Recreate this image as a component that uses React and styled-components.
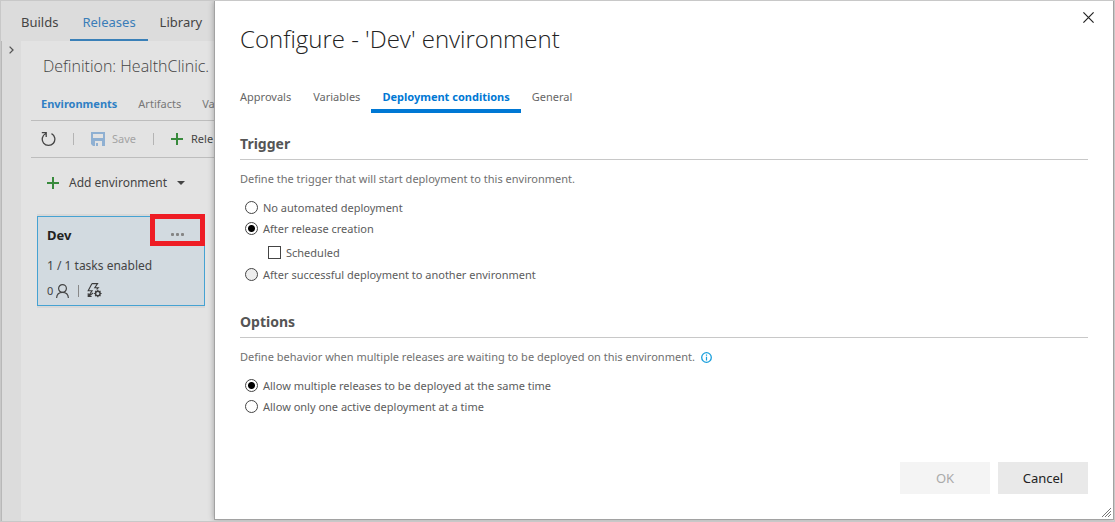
import React from "react";
import styled, { createGlobalStyle } from "styled-components";

const GlobalStyle = createGlobalStyle`
  *, *::before, *::after { box-sizing: border-box; }
  html, body { margin: 0; height: 100%; }
  #root { height: 100%; }
  body, button, input {
    font-family: "Noto Sans", "Open Sans", sans-serif;
    font-size: 11px;
  }
  h1, h2, h3, p { margin: 0; }
  button { border: 0; padding: 0; background: none; color: inherit; cursor: pointer; }
  a { color: inherit; text-decoration: none; }
  svg { display: block; flex: none; }
`;

const Page = styled.div`
  position: relative;
  display: flex;
  flex-direction: column;
  min-height: 100%;
  overflow: hidden;
  background: #dcdcdc;
  border: 1px solid #c8c8c8;
  color: #444;
`;

const TopNav = styled.nav`
  display: flex;
  height: 40px;
  padding-left: 8px;
`;

const TopLink = styled.a`
  padding: 0 12px;
  font-size: 13px;
  line-height: 42px;
  height: 40px;
  color: ${(p) => (p.$active ? "#3a7db8" : "#444")};
  border-bottom: 2px solid ${(p) => (p.$active ? "#3a80b8" : "transparent")};
`;

const Workspace = styled.div`
  display: flex;
  flex: 1;
`;

const Rail = styled.aside`
  width: 20px;
  border-left: 1px solid #b8b8b8;
  padding: 5px 0 0 7px;
`;

const RailButton = styled.button`
  display: block;
`;

const Main = styled.main`
  flex: 1;
  min-width: 0;
  padding-left: 10px;
  background: #e3e3e3;
`;

const DefinitionTitle = styled.h1`
  padding: 12px 0 0 12px;
  font-family: "Open Sans", sans-serif;
  font-size: 16px;
  font-weight: 300;
  line-height: 26px;
  white-space: nowrap;
`;

const SubTabs = styled.nav`
  display: flex;
  gap: 21px;
  padding: 14px 0 5px 10px;
  line-height: 22px;
`;

const SubTab = styled.a`
  color: ${(p) => (p.$active ? "#2f7fc4" : "#777")};
  font-weight: ${(p) => (p.$active ? 700 : 400)};
`;

const Toolbar = styled.div`
  display: flex;
  align-items: center;
  height: 38px;
  padding-left: 10px;
  border-top: 1px solid #bdbdbd;
  border-bottom: 1px solid #bdbdbd;
`;

const ToolButton = styled.button`
  display: flex;
  align-items: center;
  gap: ${(p) => p.$gap || 7}px;
  font-size: ${(p) => (p.$large ? 12 : 11)}px;
  line-height: 20px;
  white-space: nowrap;
  color: ${(p) => (p.disabled ? "#a3a3a3" : "#444")};
`;

const Divider = styled.span`
  width: 1px;
  height: 12px;
  margin: 0 17px;
  background: #b4b4b4;
`;

const AddRow = styled.div`
  display: flex;
  padding: 15px 0 23px 16px;
`;

const EnvironmentCard = styled.section`
  position: relative;
  width: 168px;
  margin-left: 6px;
  padding: 8px 9px 5px;
  background: #d2dae0;
  border: 1px solid #46a2d2;
  box-shadow: 0 2px 0 #d8d8d8, 0 -2px 0 #d8d8d8;
`;

const CardTitle = styled.h2`
  font-size: 13px;
  line-height: 20px;
  color: #222;
`;

const CardTasks = styled.p`
  padding-top: 11px;
  font-size: 12px;
  line-height: 20px;
`;

const CardMeta = styled.div`
  display: flex;
  align-items: center;
  gap: 3px;
  padding-top: 5px;
  font-size: 11px;
  line-height: 19px;
`;

const MetaDivider = styled.span`
  width: 1px;
  height: 12px;
  margin: 0 5px 0 6px;
  background: #888;
`;

const MoreButton = styled.button`
  position: absolute;
  top: -3px;
  right: -1px;
  display: flex;
  align-items: center;
  justify-content: center;
  gap: 2px;
  width: 55px;
  height: 32px;
  padding-top: 9px;
  border: 5px solid #ee1c24;
`;

const Dot = styled.i`
  width: 3px;
  height: 3px;
  border-radius: 1px;
  background: #858585;
`;

const Dialog = styled.section`
  position: absolute;
  inset: 0 0 1px 213px;
  display: flex;
  flex-direction: column;
  padding: 17px 25px 25px;
  background: #fff;
  border: 1px solid #a2a2a2;
  border-top: 0;
  box-shadow: 0 0 6px rgba(0, 0, 0, 0.3);
  color: #5c5c5c;
`;

const DialogTitle = styled.h2`
  font-family: "Open Sans", sans-serif;
  font-size: 24px;
  font-weight: 300;
  line-height: 42px;
  color: #222;
`;

const CloseButton = styled.button`
  position: absolute;
  top: 10px;
  right: 18px;
  padding: 1px;
`;

const DialogTabs = styled.nav`
  display: flex;
  margin: 26px 0 0 -11px;
`;

const DialogTab = styled.a`
  padding: 0 11px 1px;
  line-height: 22px;
  border-bottom: 4px solid ${(p) => (p.$active ? "#0078d4" : "transparent")};
  color: ${(p) => (p.$active ? "#0078d4" : "#666")};
  font-weight: ${(p) => (p.$active ? 700 : 400)};
`;

const Section = styled.section`
  padding-top: ${(p) => p.$top}px;
`;

const SectionTitle = styled.h3`
  padding-bottom: 5px;
  border-bottom: 1px solid #c8c8c8;
  font-size: 14px;
  line-height: 20px;
  color: #555;
`;

const Description = styled.p`
  display: flex;
  align-items: center;
  gap: 6px;
  padding: 8px 0 7px;
  line-height: 22px;
  color: #707070;
`;

const Choice = styled.label`
  display: flex;
  align-items: center;
  gap: 5px;
  width: fit-content;
  margin-left: ${(p) => (p.$nested ? 28 : 5)}px;
  padding: ${(p) => (p.$nested ? "3px 0 1px" : "0")};
  line-height: 21px;
`;

const Mark = styled.input`
  appearance: none;
  width: 13px;
  height: 13px;
  margin: 0;
  border: 1px solid #444;
  border-radius: ${(p) => (p.type === "radio" ? "50%" : "0")};
  background: ${(p) => (p.disabled ? "#eee" : "#fff")};
  &:checked {
    background: radial-gradient(circle, #000 0 3px, #fff 4px);
  }
`;

const Footer = styled.footer`
  display: flex;
  justify-content: flex-end;
  gap: 8px;
  margin-top: auto;
`;

const FooterButton = styled.button`
  width: 90px;
  height: 32px;
  font-size: 13px;
  background: ${(p) => (p.disabled ? "#f4f4f4" : "#e9e9e9")};
  color: ${(p) => (p.disabled ? "#aaa" : "#222")};
`;

const ResizeGrip = styled.span`
  position: absolute;
  right: 2px;
  bottom: 2px;
`;

const PlusIcon = () => (
  <svg width="12" height="12" viewBox="0 0 12 12" stroke="#388a3c" strokeWidth="2">
    <path d="M6 0v12M0 6h12" />
  </svg>
);

const RefreshIcon = () => (
  <svg width="15" height="16" viewBox="0 0 15 16" fill="none" stroke="#444" strokeWidth="1.3">
    <path d="M10.500 2.600A6.300 6.300 0 1 1 4.800 2.500M.8 1.700h4.400v4.300" />
  </svg>
);

const SaveIcon = () => (
  <svg width="14" height="14" viewBox="0 0 14 14" fill="#8fb0d2">
    <path fillRule="evenodd" d="M0 0h14v14h-3V9H4v5H2L0 12zM2 2v4h10V2z" />
    <path d="M5 11h2v3H5z" />
  </svg>
);

const CaretIcon = () => (
  <svg width="8" height="4" viewBox="0 0 8 4" fill="#444">
    <path d="M0 0h8L4 4z" />
  </svg>
);

const ChevronIcon = () => (
  <svg width="5" height="8" viewBox="0 0 5 8" fill="none" stroke="#555" strokeWidth="1.3">
    <path d="M.6.6 4 4 .6 7.4" />
  </svg>
);

const PersonIcon = () => (
  <svg width="13" height="14" viewBox="0 0 13 14" fill="none" stroke="#444" strokeWidth="1.2">
    <circle cx="6.5" cy="4.5" r="3.9" />
    <path d="M.6 14c.2-3.3 2.4-5.6 5.9-5.6s5.7 2.3 5.9 5.6" />
  </svg>
);

const TriggerIcon = () => (
  <svg width="15" height="15" viewBox="0 0 15 15" fill="none" stroke="#3c3c3c" strokeWidth="1.1">
    <path d="M5 .6h5.600L7.800 4.800h3.400L9.600 6.300M5 .6 1.200 7.700h3.900L1.200 13.400l5-3.400M1.200 10.200v3.200h3.400" />
    <circle cx="10.8" cy="10.5" r="2.3" strokeWidth="1.5" />
    <path d="M10.800 6.800v1.400M10.800 12.800v1.500M7.100 10.500h1.400M13.100 10.500h1.500M8.100 7.800l1.100 1.100M12.400 12.100l1.100 1.100M8.100 13.200l1.100-1.100M12.400 8.900l1.100-1.100" />
  </svg>
);

const InfoIcon = () => (
  <svg width="11" height="11" viewBox="0 0 11 11" fill="none" stroke="#1a9fdc">
    <circle cx="5.5" cy="5.5" r="4.8" strokeWidth="1.3" />
    <path d="M5.5 2.5v1.2M5.5 4.7v3.7" strokeWidth="1.2" />
  </svg>
);

const CloseIcon = () => (
  <svg width="11" height="11" viewBox="0 0 11 11" fill="none" stroke="#222" strokeWidth="1.2">
    <path d="m.4.4 10.2 10.2M10.6.4.4 10.6" />
  </svg>
);

const GripIcon = () => (
  <svg width="9" height="9" viewBox="0 0 9 9" fill="none" stroke="#777">
    <path d="M0 9 9 0M3 9l6-6M6 9l3-3" />
  </svg>
);

export default function App() {
  return (
    <>
      <GlobalStyle />
      <Page>
        <TopNav>
          <TopLink href="#builds">Builds</TopLink>
          <TopLink href="#releases" $active>Releases</TopLink>
          <TopLink href="#library">Library</TopLink>
        </TopNav>
        <Workspace>
          <Rail>
            <RailButton type="button" aria-label="Expand panel"><ChevronIcon /></RailButton>
          </Rail>
          <Main>
            <DefinitionTitle>Definition: HealthClinic.</DefinitionTitle>
            <SubTabs>
              <SubTab href="#environments" $active>Environments</SubTab>
              <SubTab href="#artifacts">Artifacts</SubTab>
              <SubTab href="#variables">Va</SubTab>
            </SubTabs>
            <Toolbar>
              <ToolButton type="button" aria-label="Refresh"><RefreshIcon /></ToolButton>
              <Divider />
              <ToolButton type="button" disabled><SaveIcon />Save</ToolButton>
              <Divider />
              <ToolButton type="button" $gap={8}><PlusIcon />Rele</ToolButton>
            </Toolbar>
            <AddRow>
              <ToolButton type="button" $gap={10} $large><PlusIcon />Add environment<CaretIcon /></ToolButton>
            </AddRow>
            <EnvironmentCard>
              <CardTitle>Dev</CardTitle>
              <CardTasks>1 / 1 tasks enabled</CardTasks>
              <CardMeta>0<PersonIcon /><MetaDivider /><TriggerIcon /></CardMeta>
              <MoreButton type="button" aria-label="More actions"><Dot /><Dot /><Dot /></MoreButton>
            </EnvironmentCard>
          </Main>
        </Workspace>

        <Dialog role="dialog" aria-labelledby="dialog-title">
          <DialogTitle id="dialog-title">Configure - 'Dev' environment</DialogTitle>
          <CloseButton type="button" aria-label="Close"><CloseIcon /></CloseButton>
          <DialogTabs>
            <DialogTab href="#approvals">Approvals</DialogTab>
            <DialogTab href="#env-variables">Variables</DialogTab>
            <DialogTab href="#conditions" $active>Deployment conditions</DialogTab>
            <DialogTab href="#general">General</DialogTab>
          </DialogTabs>
          <Section $top={21}>
            <SectionTitle>Trigger</SectionTitle>
            <Description>Define the trigger that will start deployment to this environment.</Description>
            <Choice><Mark type="radio" name="trigger" />No automated deployment</Choice>
            <Choice><Mark type="radio" name="trigger" defaultChecked />After release creation</Choice>
            <Choice $nested><Mark type="checkbox" />Scheduled</Choice>
            <Choice><Mark type="radio" name="trigger" disabled />After successful deployment to another environment</Choice>
          </Section>
          <Section $top={27}>
            <SectionTitle>Options</SectionTitle>
            <Description>Define behavior when multiple releases are waiting to be deployed on this environment.<InfoIcon /></Description>
            <Choice><Mark type="radio" name="options" defaultChecked />Allow multiple releases to be deployed at the same time</Choice>
            <Choice><Mark type="radio" name="options" />Allow only one active deployment at a time</Choice>
          </Section>
          <Footer>
            <FooterButton type="button" disabled>OK</FooterButton>
            <FooterButton type="button">Cancel</FooterButton>
          </Footer>
          <ResizeGrip><GripIcon /></ResizeGrip>
        </Dialog>
      </Page>
    </>
  );
}
